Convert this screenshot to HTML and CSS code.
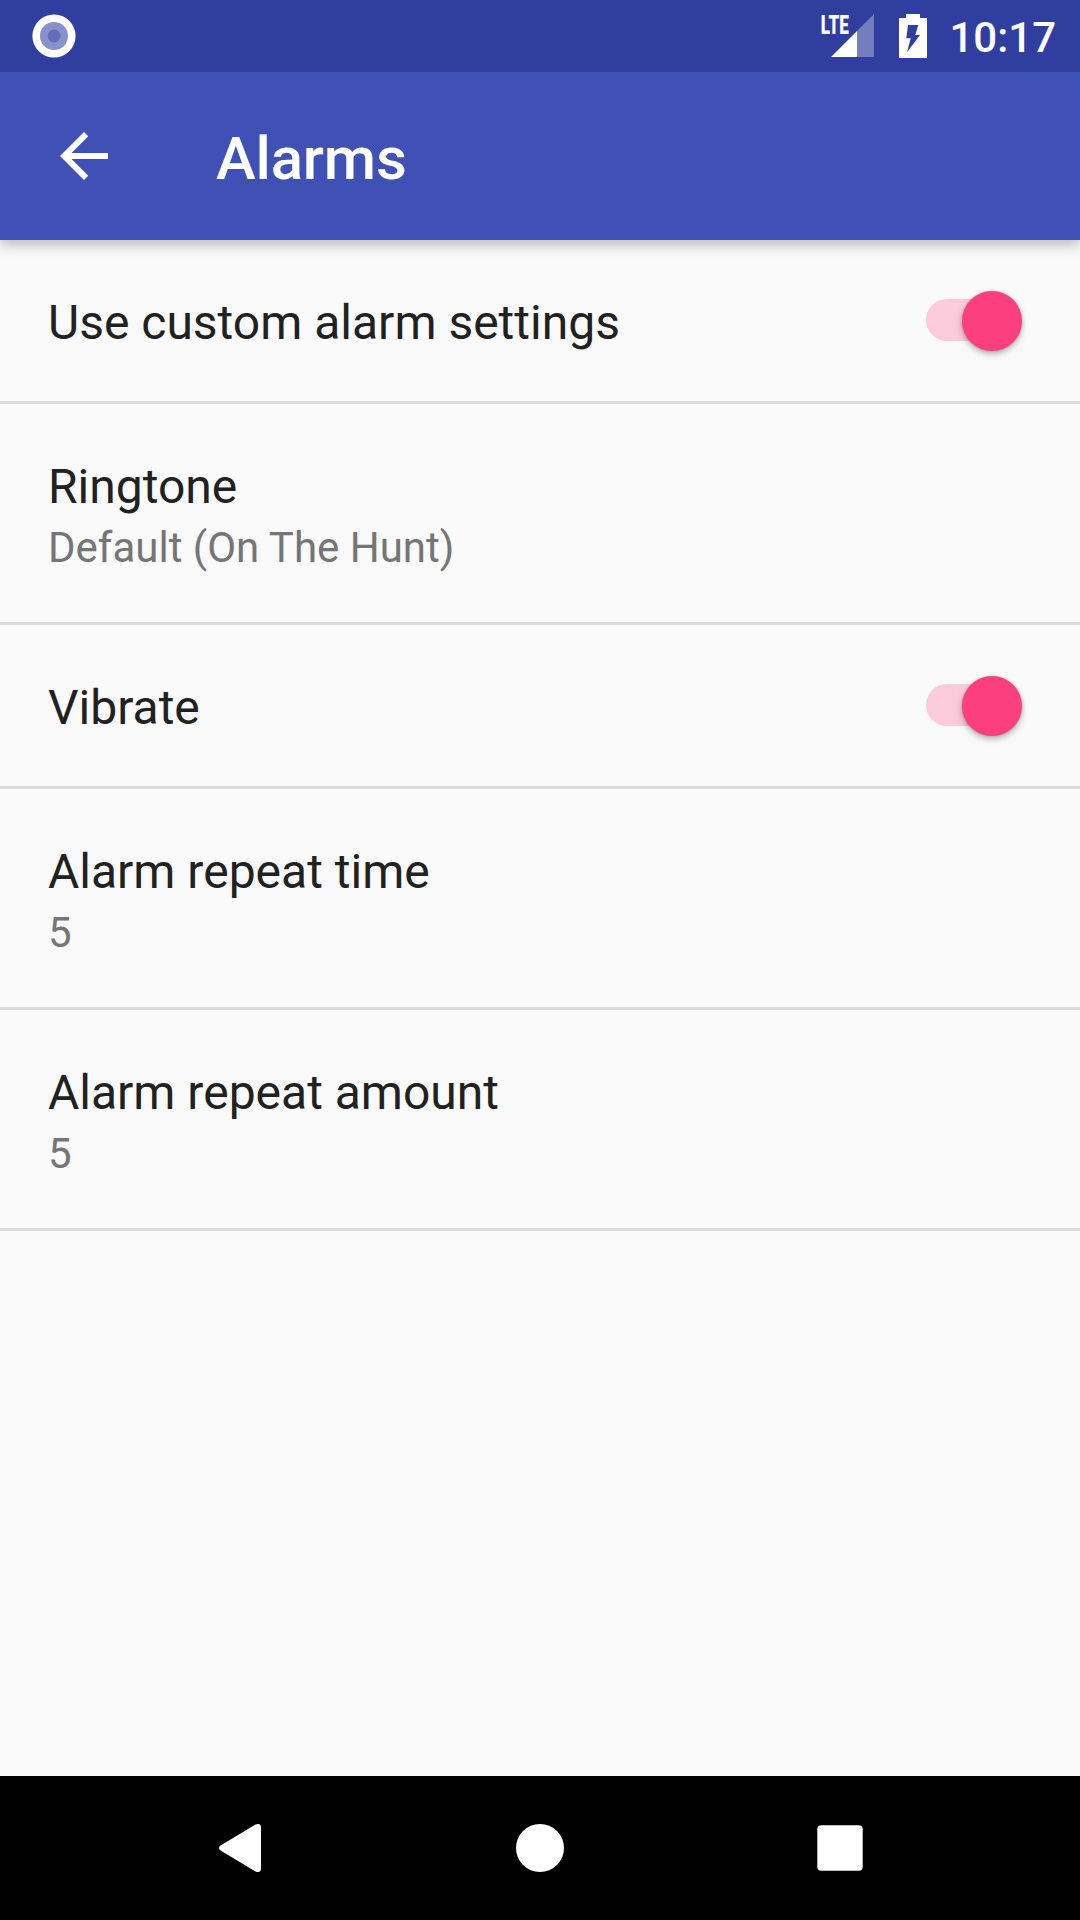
FILE: index.html
```html
<!DOCTYPE html>
<html lang="en">
<head>
<meta charset="utf-8">
<title>Alarms</title>
<link rel="stylesheet" href="styles.css">
</head>
<body>
<div class="screen">
  <div class="status-bar">
    <svg class="status-notification" viewBox="0 0 44 44">
      <circle cx="22" cy="22" r="21.6" fill="#fff"/>
      <circle cx="22" cy="22" r="14" fill="#8891ca"/>
      <circle cx="22" cy="22" r="6.5" fill="#646eb7"/>
    </svg>
    <div class="status-icons">
      <svg class="status-signal" viewBox="0 0 54 44">
        <path d="M37 43V17L54 0V43Z" fill="#fff" fill-opacity=".33"/>
        <path d="M11 43L37 17V43Z" fill="#fff"/>
        <text class="signal-label" x="0.8" y="19.7" textLength="28" lengthAdjust="spacingAndGlyphs">LTE</text>
      </svg>
      <svg class="status-battery" viewBox="0 0 28 44">
        <path fill="#fff" fill-rule="evenodd" d="M7 0H21V4H28V44H0V4H7ZM9 11L7.3 24.3H11.7L8 38.3L21 21H16.3L19.3 11Z"/>
      </svg>
      <span class="status-time">10:17</span>
    </div>
  </div>

  <header class="app-bar">
    <svg class="app-bar-back" viewBox="0 0 24 24" fill="#fff">
      <path d="M20 11H7.83l5.59-5.59L12 4l-8 8 8 8 1.41-1.41L7.83 13H20v-2z"/>
    </svg>
    <h1 class="app-bar-title">Alarms</h1>
  </header>

  <main class="settings">
    <div class="setting">
      <div class="setting-text">
        <div class="setting-title">Use custom alarm settings</div>
      </div>
      <div class="switch"><div class="switch-thumb"></div></div>
    </div>
    <div class="setting">
      <div class="setting-text">
        <div class="setting-title">Ringtone</div>
        <div class="setting-summary">Default (On The Hunt)</div>
      </div>
    </div>
    <div class="setting">
      <div class="setting-text">
        <div class="setting-title">Vibrate</div>
      </div>
      <div class="switch"><div class="switch-thumb"></div></div>
    </div>
    <div class="setting">
      <div class="setting-text">
        <div class="setting-title">Alarm repeat time</div>
        <div class="setting-summary">5</div>
      </div>
    </div>
    <div class="setting">
      <div class="setting-text">
        <div class="setting-title">Alarm repeat amount</div>
        <div class="setting-summary">5</div>
      </div>
    </div>
  </main>

  <nav class="nav-bar">
    <svg class="nav-icon" viewBox="0 0 60 60" fill="#fff">
      <path d="M11 27.2L45.5 6.6Q47 5.8 48.8 6Q51 6.6 51 9V51Q51 53.4 48.8 54Q47 54.2 45.5 53.4L11 32.8Q9 31.500 9 30Q9 28.500 11 27.2Z"/>
    </svg>
    <svg class="nav-icon" viewBox="0 0 60 60" fill="#fff">
      <circle cx="30" cy="30" r="24"/>
    </svg>
    <svg class="nav-icon" viewBox="0 0 60 60" fill="#fff">
      <rect x="7.300" y="7.300" width="45.400" height="45.400" rx="4"/>
    </svg>
  </nav>
</div>
</body>
</html>
```
FILE: styles.css
```css
* {
  box-sizing: border-box;
}

body {
  margin: 0;
  font-family: Roboto, sans-serif;
}

svg {
  display: block;
  flex: none;
  overflow: visible;
}

.screen {
  display: flex;
  flex-direction: column;
  width: 1080px;
  height: 1920px;
  overflow: hidden;
  background: #fafafa;
}

.status-bar {
  z-index: 2;
  display: flex;
  justify-content: space-between;
  height: 72px;
  padding: 14px 24px 0 32px;
  background: #303f9f;
}

.status-notification {
  width: 44px;
  height: 44px;
}

.status-icons {
  display: flex;
  align-items: flex-start;
}

.status-signal {
  width: 54px;
  height: 44px;
  margin-right: 25px;
}

.signal-label {
  font-size: 26px;
  font-weight: 900;
  fill: #fff;
}

.status-battery {
  width: 28px;
  height: 44px;
  margin-right: 22px;
}

.status-time {
  line-height: 48px;
  font-size: 42px;
  font-weight: 500;
  color: #fff;
}

.app-bar {
  z-index: 1;
  display: flex;
  align-items: center;
  gap: 96px;
  height: 168px;
  padding-left: 48px;
  background: #3f51b5;
  box-shadow: 0 5px 12px rgba(0, 0, 0, 0.26);
}

.app-bar-back {
  width: 72px;
  height: 72px;
}

.app-bar-title {
  margin: 6px 0 0;
  line-height: 70px;
  font-size: 60px;
  font-weight: 500;
  letter-spacing: -0.2px;
  color: #fff;
}

.settings {
  flex: 1;
}

.setting {
  display: flex;
  align-items: center;
  justify-content: space-between;
  padding: 0 58px 0 48px;
  border-bottom: 3px solid #dcdcdc;
}

.setting-text {
  padding: 55px 0 50px;
}

.setting-title {
  line-height: 56px;
  font-size: 48px;
  color: #212121;
}

.setting-summary {
  margin-top: 8px;
  line-height: 49px;
  font-size: 42px;
  color: #757575;
}

.switch {
  display: flex;
  align-items: center;
  justify-content: flex-end;
  width: 96px;
  height: 42px;
  margin-bottom: 1px;
  border-radius: 21px;
  background: linear-gradient(#fccbdb, #fccbdb) no-repeat left / 70px 42px;
}

.switch-thumb {
  width: 60px;
  height: 60px;
  margin-top: 2px;
  border-radius: 50%;
  background: #fc407f;
  box-shadow: 0 3px 6px rgba(0, 0, 0, 0.3), 0 0 2px rgba(0, 0, 0, 0.2);
}

.nav-bar {
  display: flex;
  align-items: center;
  justify-content: center;
  gap: 240px;
  height: 144px;
  background: #000;
}

.nav-icon {
  width: 60px;
  height: 60px;
}
```
